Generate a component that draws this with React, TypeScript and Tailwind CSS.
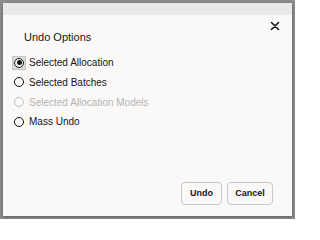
import { useState } from 'react';

const options = [
  { id: 'allocation', label: 'Selected Allocation', disabled: false },
  { id: 'batches', label: 'Selected Batches', disabled: false },
  { id: 'models', label: 'Selected Allocation Models', disabled: true },
  { id: 'mass', label: 'Mass Undo', disabled: false },
];

function Radio({ checked, disabled, focused }: { checked: boolean; disabled: boolean; focused: boolean }) {
  return (
    <span className="relative flex h-[10px] w-[10px] shrink-0">
      {focused && (
        <span className="absolute inset-[-2px] bg-[#dedcdb] border border-[#c6c4c2]" />
      )}
      <span
        className={`relative flex h-[10px] w-[10px] items-center justify-center rounded-full border-[1.5px] bg-[#fbf9f8] ${
          disabled ? 'border-[#c4c2c0]' : 'border-[#161513]'
        }`}
      >
        {checked && <span className="h-[5px] w-[5px] rounded-full bg-[#161513]" />}
      </span>
    </span>
  );
}

export default function App() {
  const [selected, setSelected] = useState('allocation');

  return (
    <div className="w-[295px] h-[219px] bg-[#8d8d8d] p-[3px] font-['Liberation_Sans',Arial,sans-serif]">
      <div className="flex h-[213px] flex-col bg-[#fbf9f8] shadow-[0_1px_3px_rgba(0,0,0,0.35)]">
        {/* Header strip */}
        <div className="h-[12px] bg-[#ebe9e7]" />

        {/* Title */}
        <div className="flex items-start justify-between pl-[21px] pr-[12px]">
          <h2 className="mt-[14px] h-[16px] text-[11px] leading-[16px] text-[#161513]">Undo Options</h2>
          <button className="mt-[6px] flex h-[10px] w-[10px] items-center justify-center" aria-label="Close">
            <svg width="10" height="10" viewBox="0 0 10 10" fill="none" stroke="#161513" strokeWidth="1.6" strokeLinecap="round">
              <path d="M1.5 1.5 L8.5 8.5 M8.5 1.5 L1.5 8.5" />
            </svg>
          </button>
        </div>

        {/* Options */}
        <div className="mt-[8px] flex flex-col pl-[11px]">
          {options.map((o) => (
            <label
              key={o.id}
              className={`flex h-[19.67px] items-center gap-[5px] text-[10px] ${
                o.disabled ? 'text-[#b5b3b1]' : 'text-[#161513]'
              }`}
              onClick={() => !o.disabled && setSelected(o.id)}
            >
              <Radio checked={selected === o.id} disabled={o.disabled} focused={selected === o.id} />
              <span>{o.label}</span>
            </label>
          ))}
        </div>

        {/* Footer */}
        <div className="mt-auto flex justify-end gap-[5px] pb-[11px] pr-[19px]">
          <button className="h-[23px] w-[41px] rounded-[4px] border border-[#c9c7c5] bg-[#fbf9f8] text-[9px] font-bold text-[#161513]">
            Undo
          </button>
          <button className="h-[23px] w-[46px] rounded-[4px] border border-[#c9c7c5] bg-[#fbf9f8] text-[9px] font-bold text-[#161513]">
            Cancel
          </button>
        </div>
      </div>
    </div>
  );
}
